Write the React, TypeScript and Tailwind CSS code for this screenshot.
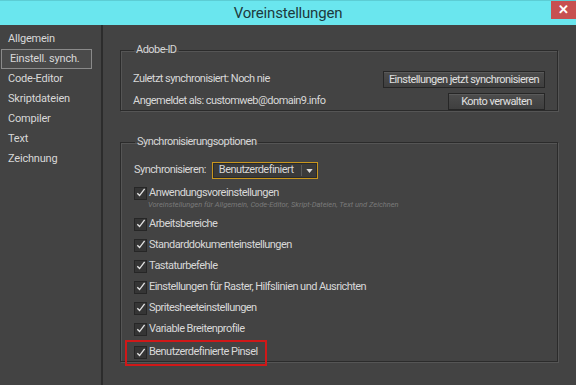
import { ReactNode } from "react";

const font = { fontFamily: "Roboto, 'Noto Sans', sans-serif" };

const navItems = [
  "Allgemein",
  "Einstell. synch.",
  "Code-Editor",
  "Skriptdateien",
  "Compiler",
  "Text",
  "Zeichnung",
];

const options = [
  "Arbeitsbereiche",
  "Standarddokumenteinstellungen",
  "Tastaturbefehle",
  "Einstellungen für Raster, Hilfslinien und Ausrichten",
  "Spritesheeteinstellungen",
  "Variable Breitenprofile",
];

function Check() {
  return (
    <span className="flex h-[13px] w-[13px] shrink-0 items-center justify-center border border-[#262626] bg-[#353535]">
      <svg viewBox="0 0 12 12" className="h-[12px] w-[12px]">
        <path d="M2.5 6.2 L5 8.8 L10.5 1.5" fill="none" stroke="#e2e2e2" strokeWidth="1.5" />
      </svg>
    </span>
  );
}

function CheckRow({ label }: { label: string }) {
  return (
    <div className="flex h-[21px] items-center gap-[2px]">
      <Check />
      <span>{label}</span>
    </div>
  );
}

function Group({ title, children, className }: { title: string; children: ReactNode; className?: string }) {
  return (
    <fieldset
      className={`mx-0 border border-[#2b2b2b] shadow-[inset_1px_1px_0_#555,1px_1px_0_#555] ${className ?? ""}`}
    >
      <legend className="ml-[1px] px-[2px] text-[#d6d6d6]">{title}</legend>
      {children}
    </fieldset>
  );
}

function Button({ children, className }: { children: ReactNode; className?: string }) {
  return (
    <button
      className={`h-[17px] border border-[#262626] bg-gradient-to-b from-[#4c4c4c] to-[#3f3f3f] text-[11px] leading-none text-[#e0e0e0] shadow-[inset_0_1px_0_#5a5a5a] ${className ?? ""}`}
    >
      {children}
    </button>
  );
}

export default function App() {
  return (
    <div
      className="flex h-[385px] w-[576px] flex-col overflow-hidden bg-[#434343] text-[11px] tracking-[-0.55px] text-[#d8d8d8]"
      style={font}
    >
      {/* title bar */}
      <div className="flex h-[25px] shrink-0 items-start border-t border-[#5ccdd4] bg-[#6ae6ee]">
        <div className="flex h-[24px] flex-1 items-center justify-center pl-[25px] text-[15px] tracking-[-0.2px] text-[#1d3a3d]">
          Voreinstellungen
        </div>
        <div className="flex h-[18px] w-[25px] items-center justify-center bg-[#c75050] text-[13px] font-bold tracking-normal text-white">
          ✕
        </div>
      </div>

      <div className="flex flex-1">
        {/* sidebar */}
        <div className="w-[103px] shrink-0 border-r-2 border-[#2c2c2c] pt-[4px] tracking-[-0.2px]">
          {navItems.map((item, i) => (
            <div
              key={item}
              className={`flex h-[20px] w-[91px] items-center pl-[8px] ${
                i === 1 ? "ml-[1px] border border-[#8a8a8a] bg-[#4a4a4a] pl-[7px]" : ""
              }`}
            >
              {item}
            </div>
          ))}
        </div>

        {/* main */}
        <div className="flex-1 pl-[17px] pr-[18px] pt-[17px]">
          <Group title="Adobe-ID" className="h-[69px] px-[12px]">
            <div className="mt-[10px] flex h-[22px] items-center justify-between">
              <span>Zuletzt synchronisiert: Noch nie</span>
              <Button className="w-[162px]">Einstellungen jetzt synchronisieren</Button>
            </div>
            <div className="flex h-[22px] items-center justify-between">
              <span>Angemeldet als: customweb@domain9.info</span>
              <Button className="w-[97px]">Konto verwalten</Button>
            </div>
          </Group>

          <Group title="Synchronisierungsoptionen" className="mt-[23px] h-[228px] pl-[13px]">
            <div className="mt-[9px] flex h-[22px] items-center gap-[6px]">
              <span>Synchronisieren:</span>
              <div className="flex h-[17px] w-[106px] items-center border border-[#c8961e] bg-[#3a3a3a] shadow-[inset_0_0_0_1px_#2a2a2a]">
                <span className="flex-1 pl-[6px]">Benutzerdefiniert</span>
                <span className="flex h-[11px] w-[16px] items-center justify-center border-l border-[#5a5a5a]">
                  <svg viewBox="0 0 8 5" className="h-[4px] w-[7px]">
                    <path d="M0 0 H8 L4 5 Z" fill="#d8d8d8" />
                  </svg>
                </span>
              </div>
            </div>
            <div className="mt-[1px] flex h-[21px] items-center gap-[2px]">
              <Check />
              <span>Anwendungsvoreinstellungen</span>
            </div>
            <div className="-mt-[4px] h-[14px] pl-[14px] text-[7.5px] italic leading-[10px] tracking-normal text-[#7a7a7a]">
              Voreinstellungen für Allgemein, Code-Editor, Skript-Dateien, Text und Zeichnen
            </div>
            {options.map((o) => (
              <CheckRow key={o} label={o} />
            ))}
            <div className="-ml-[9px] flex h-[26px] w-[142px] items-center gap-[2px] border-2 border-[#d01818] pl-[7px]">
              <Check />
              <span>Benutzerdefinierte Pinsel</span>
            </div>
          </Group>
        </div>
      </div>
    </div>
  );
}
